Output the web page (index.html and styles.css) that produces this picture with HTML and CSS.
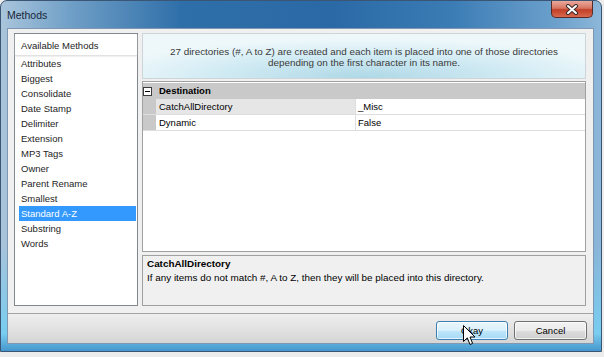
FILE: index.html
```html
<!DOCTYPE html>
<html lang="en">
<head>
	<meta charset="UTF-8">
	<meta name="viewport" content="width=device-width, initial-scale=1.0">
	<title>Methods</title>
	<link rel="stylesheet" href="styles.css">
</head>
<body>
	<div class="window">
		<div class="titlebar">
			<span class="title">Methods</span>
			<div class="close">
				<svg width="14" height="11" viewBox="0 0 14 11">
					<path d="M3 2 L11 9 M11 2 L3 9" stroke="#3b2a2a" stroke-width="4" stroke-linecap="round"/>
					<path d="M3 2 L11 9 M11 2 L3 9" stroke="#ffffff" stroke-width="2" stroke-linecap="round"/>
				</svg>
			</div>
		</div>

		<div class="client">
			<div class="main">
				<div class="method-list">
					<div class="list-head">Available Methods</div>
					<ul class="items">
						<li>Attributes</li>
						<li>Biggest</li>
						<li>Consolidate</li>
						<li>Date Stamp</li>
						<li>Delimiter</li>
						<li>Extension</li>
						<li>MP3 Tags</li>
						<li>Owner</li>
						<li>Parent Rename</li>
						<li>Smallest</li>
						<li class="selected">Standard A-Z</li>
						<li>Substring</li>
						<li>Words</li>
					</ul>
				</div>

				<div class="detail">
					<div class="summary">
						27 directories (#, A to Z) are created and each item is placed into one of those directories<br>
						depending on the first character in its name.
					</div>

					<div class="grid">
						<div class="grid-row category">
							<span class="gutter"><span class="toggle"></span></span>
							<span class="cat-name">Destination</span>
						</div>
						<div class="grid-row prop selected">
							<span class="gutter"></span>
							<span class="name">CatchAllDirectory</span>
							<span class="value">_Misc</span>
						</div>
						<div class="grid-row prop">
							<span class="gutter"></span>
							<span class="name">Dynamic</span>
							<span class="value">False</span>
						</div>
					</div>

					<div class="help">
						<div class="help-title">CatchAllDirectory</div>
						<div class="help-text">If any items do not match #, A to Z, then they will be placed into this directory.</div>
					</div>
				</div>
			</div>

			<div class="buttons">
				<button class="btn hover">Okay</button>
				<button class="btn">Cancel</button>
			</div>
		</div>

		<svg class="cursor" width="13" height="21" viewBox="0 0 13 21">
			<path d="M0.5 0.5 L0.5 16.5 L4.3 12.9 L7 19.5 L9.6 18.4 L7 12 L12 12 Z" fill="#ffffff" stroke="#000000" stroke-width="1" stroke-linejoin="round"/>
		</svg>
	</div>
</body>
</html>
```

FILE: styles.css
```css
* {
	box-sizing: border-box;
}

body {
	margin: 0;
	background: #ececec;
	font-family: "Liberation Sans", Arial, sans-serif;
	font-size: 9.5px;
	color: #000;
}

.window {
	position: relative;
	width: 602px;
	height: 352px;
	display: flex;
	flex-direction: column;
	padding: 0 7px 7px 6px;
	border: 1px solid #3a5674;
	border-radius: 7px 7px 0 0;
	background:
		linear-gradient(to bottom, rgba(120, 205, 240, 0) 0, rgba(120, 205, 240, 0) 70%, rgba(120, 205, 240, 1) 95%, rgba(70, 150, 205, 1) 100%),
		linear-gradient(90deg, #a9c5dc 0%, #6e9ec6 12%, #2f6fa9 30%, #2a69a5 55%, #3b7cb5 75%, #6a9fcb 92%, #8db7d9 100%);
}

/* title bar */
.titlebar {
	height: 27px;
	display: flex;
	justify-content: space-between;
	align-items: flex-start;
}

.title {
	margin-top: 8px;
	font-size: 10.5px;
	line-height: 12px;
	color: #18273a;
}

.close {
	width: 42px;
	height: 17px;
	margin-right: 1px;
	display: flex;
	align-items: center;
	justify-content: center;
	border: 1px solid #5a2a26;
	border-top: none;
	border-radius: 0 0 5px 5px;
	background: linear-gradient(#eaa99c 0%, #d77563 45%, #c13f26 55%, #d8694f 100%);
}

/* client area */
.client {
	flex: 1;
	display: flex;
	flex-direction: column;
	background: #f0f0f0;
	border: 1px solid #7f97b0;
}

.main {
	height: 284px;
	display: flex;
	gap: 4px;
	padding: 4px 7px 7px 6px;
}

.method-list {
	width: 124px;
	background: #fff;
	border: 1px solid #828790;
}

.list-head {
	height: 22px;
	padding: 3px 0 0 6px;
	line-height: 18px;
	color: #1e1e1e;
	border-bottom: 1px solid #e2e2e2;
	box-shadow: 0 1px 1px #f0f0f0;
}

.items {
	list-style: none;
	margin: 0;
	padding: 0;
}

.items li {
	height: 15px;
	line-height: 15px;
	margin: 0 1px 0 4px;
	padding-left: 2px;
	color: #1e1e1e;
}

.items li.selected {
	background: #3399ff;
	color: #fff;
}

.detail {
	flex: 1;
	display: flex;
	flex-direction: column;
	font-size: 9.9px;
}

.summary {
	height: 46px;
	display: flex;
	align-items: center;
	justify-content: center;
	padding-top: 1px;
	text-align: center;
	line-height: 11px;
	color: #3a3a3a;
	border: 1px solid #cdd5d9;
	background: radial-gradient(ellipse 60% 90% at 50% 100%, #aed8e6 0%, #d0eaf3 55%, #eef8fb 100%);
}

/* property grid */
.grid {
	height: 171px;
	margin-top: 2px;
	padding-top: 1px;
	background: #fff;
	border: 1px solid #a0a0a0;
	font-size: 9.5px;
}

.grid-row {
	display: flex;
	height: 16px;
	line-height: 16px;
}

.gutter {
	width: 13px;
	display: flex;
	align-items: center;
	background: #c9c9c9;
}

.toggle {
	position: relative;
	width: 9px;
	height: 9px;
	margin-top: 1px;
	background: #fff;
	border: 1px solid #3c3c3c;
}

.toggle::after {
	content: "";
	position: absolute;
	left: 1px;
	top: 3px;
	width: 5px;
	height: 1px;
	background: #000;
}

.category {
	background: #c9c9c9;
}

.cat-name {
	padding-left: 3px;
	font-weight: bold;
}

.prop {
	border-bottom: 1px solid #dedede;
}

.prop .name {
	width: 200px;
	padding-left: 3px;
	border-right: 1px solid #dedede;
}

.prop.selected .name {
	background: #e6e6e6;
}

.prop .value {
	padding-left: 2px;
}

.help {
	height: 51px;
	margin-top: 3px;
	padding: 1px 4px;
	line-height: 14px;
	background: #f0f0f0;
	border: 1px solid #a0a0a0;
}

.help-title {
	font-weight: bold;
}

/* button bar */
.buttons {
	flex: 1;
	display: flex;
	justify-content: flex-end;
	align-items: flex-start;
	gap: 6px;
	padding: 7px 6px 0 0;
	border-top: 1px solid #a3a3a3;
	background: linear-gradient(#efefef, #d5d5d5);
}

.btn {
	width: 72px;
	height: 19px;
	padding: 0;
	font-family: "Liberation Sans", Arial, sans-serif;
	font-size: 9.5px;
	color: #000;
	border: 1px solid #707070;
	border-radius: 3px;
	box-shadow: inset 0 0 0 1px rgba(255, 255, 255, 0.7);
	background: linear-gradient(#f2f2f2 0%, #ebebeb 50%, #dddddd 51%, #cfcfcf 100%);
}

.btn + .btn {
	width: 73px;
}

.btn.hover {
	border-color: #3c7fb1;
	background: linear-gradient(#eaf6fd 0%, #d9f0fc 50%, #bee6fd 51%, #a7d9f5 100%);
}

.cursor {
	position: absolute;
	left: 462px;
	top: 324px;
}
```
